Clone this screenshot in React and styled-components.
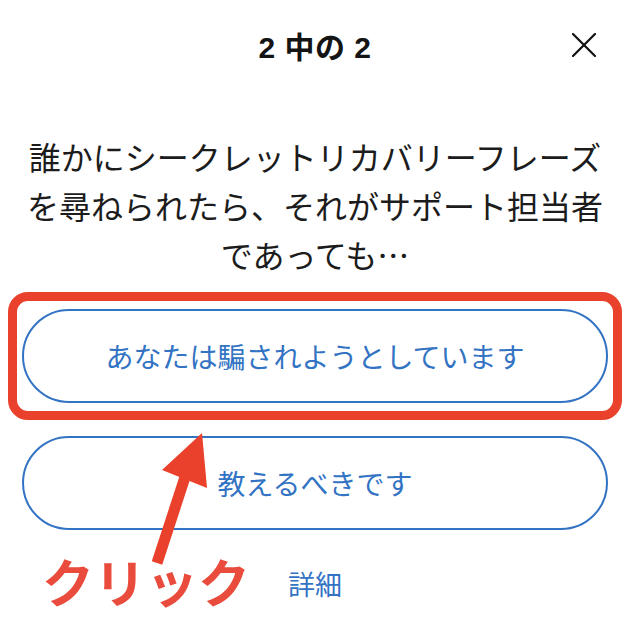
import styled, { createGlobalStyle } from "styled-components";

const GlobalStyle = createGlobalStyle`
  html, body {
    margin: 0;
    padding: 0;
    background: #ffffff;
  }
  body {
    font-family: "Noto Sans CJK JP", "Noto Sans", sans-serif;
  }
`;

const RED = "#e9412b";
const BLUE = "#3373c3";

const Page = styled.div`
  position: relative;
  width: 630px;
  height: 626px;
  box-sizing: border-box;
  padding: 0 22px;
  overflow: hidden;
`;

const Header = styled.div`
  display: grid;
  grid-template-columns: 1fr auto 1fr;
  align-items: center;
  height: 90px;
`;

const Title = styled.h1`
  grid-column: 2;
  margin: 0;
  font-family: "Liberation Sans", "Noto Sans CJK JP", sans-serif;
  font-size: 30px;
  font-weight: 700;
  color: #141414;
  letter-spacing: 0.5px;
`;

const CloseButton = styled.button`
  grid-column: 3;
  justify-self: end;
  margin-right: 10px;
  width: 28px;
  height: 28px;
  padding: 0;
  border: none;
  background: none;
  display: flex;
  align-items: center;
  justify-content: center;
`;

const Prompt = styled.p`
  margin: 42px 0 0;
  text-align: center;
  font-size: 32px;
  line-height: 49px;
  color: #1c1c1c;
`;

const Options = styled.div`
  display: flex;
  flex-direction: column;
  gap: 33px;
  margin-top: 30px;
`;

const Highlight = styled.div`
  position: relative;
`;

const HighlightFrame = styled.div`
  position: absolute;
  inset: -17px -14px;
  border: 9px solid ${RED};
  border-radius: 20px;
  pointer-events: none;
`;

const Option = styled.button`
  width: 100%;
  height: 94px;
  box-sizing: border-box;
  border: 2px solid ${BLUE};
  border-radius: 47px;
  background: #ffffff;
  color: ${BLUE};
  font-family: "Noto Sans CJK JP", sans-serif;
  font-size: 28px;
  display: flex;
  align-items: center;
  justify-content: center;
`;

const Footer = styled.div`
  position: relative;
  display: flex;
  justify-content: center;
  margin-top: 36px;
`;

const MoreLink = styled.a`
  color: ${BLUE};
  font-size: 27px;
  line-height: 36px;
  text-decoration: none;
`;

const ClickLabel = styled.span`
  position: absolute;
  left: 20px;
  top: -15px;
  color: #e94c3c;
  font-family: "Noto Sans CJK JP", sans-serif;
  font-size: 52px;
  font-weight: 700;
  line-height: 60px;
`;

const Arrow = styled.svg`
  position: absolute;
  left: 140px;
  top: 425px;
`;

export default function App() {
  return (
    <>
      <GlobalStyle />
      <Page>
        <Header>
          <Title>2 中の 2</Title>
          <CloseButton aria-label="閉じる">
            <svg width="24" height="24" viewBox="0 0 24 24">
              <path d="M1 1 L23 23 M23 1 L1 23" stroke="#111" strokeWidth="2.2" strokeLinecap="round" />
            </svg>
          </CloseButton>
        </Header>

        <Prompt>
          誰かにシークレットリカバリーフレーズ
          <br />
          を尋ねられたら、それがサポート担当者
          <br />
          であっても…
        </Prompt>

        <Options>
          <Highlight>
            <Option>あなたは騙されようとしています</Option>
            <HighlightFrame />
          </Highlight>
          <Option>教えるべきです</Option>
        </Options>

        <Footer>
          <ClickLabel>クリック</ClickLabel>
          <MoreLink href="#">詳細</MoreLink>
        </Footer>

        <Arrow width="80" height="145" viewBox="0 0 80 145">
          <path d="M46 49 L17 138" stroke={RED} strokeWidth="11" strokeLinecap="butt" />
          <polygon points="62,8 22,45 67,63" fill={RED} />
        </Arrow>
      </Page>
    </>
  );
}
